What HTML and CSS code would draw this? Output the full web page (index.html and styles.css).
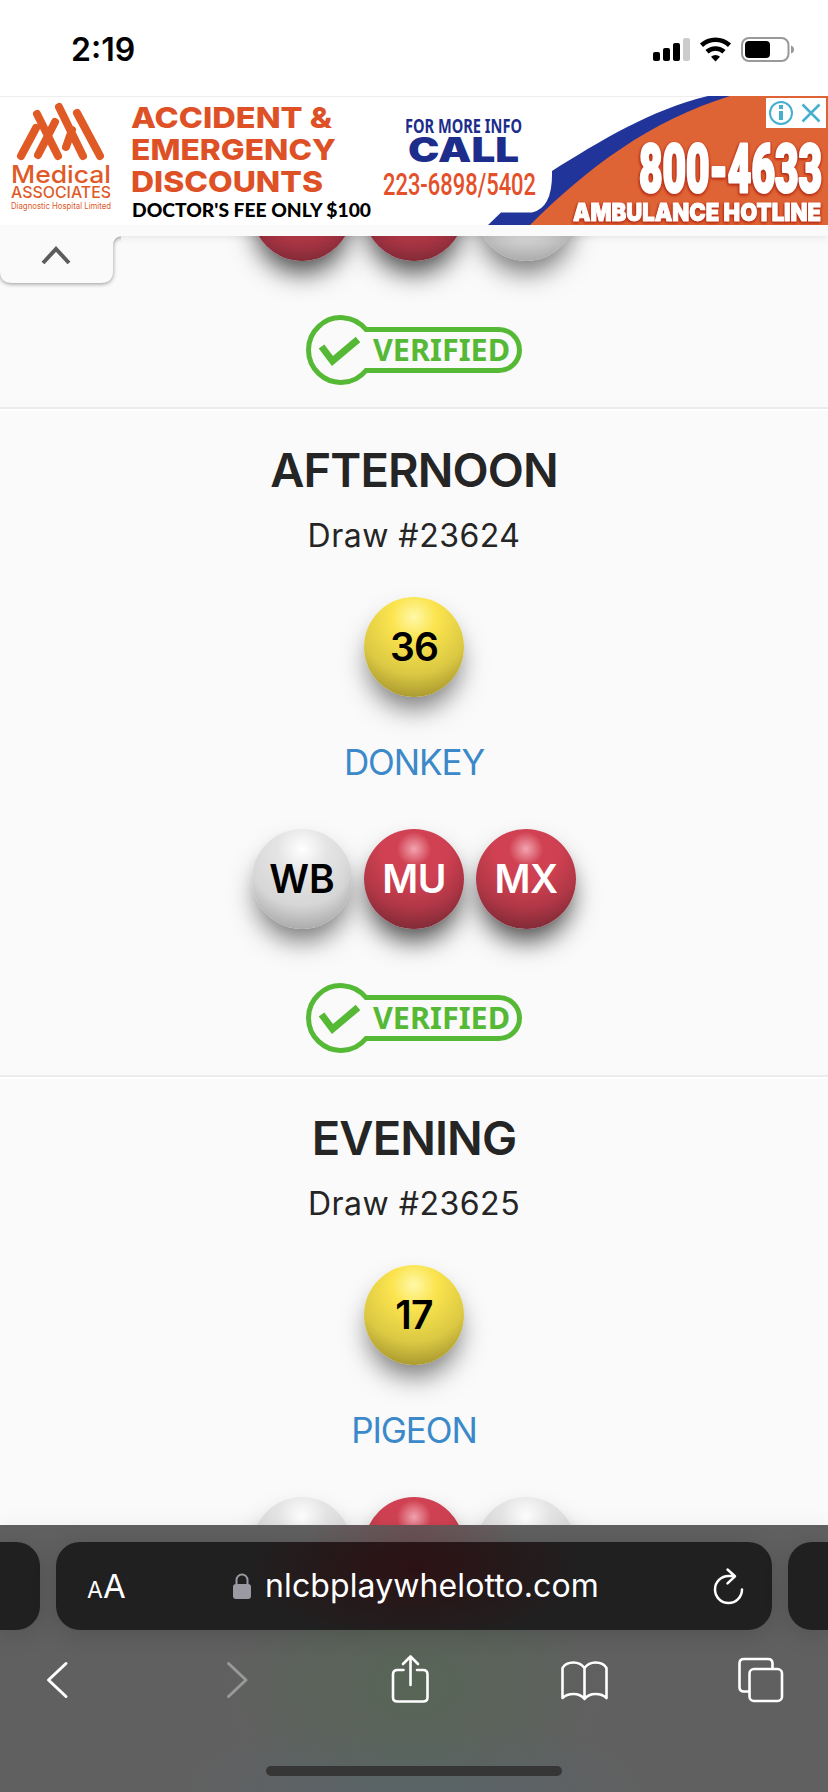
FILE: index.html
```html
<!DOCTYPE html>
<html lang="en">
<head>
<meta charset="utf-8">
<meta name="viewport" content="width=device-width">
<title>Play Whe Results</title>
<link rel="stylesheet" href="styles.css">
</head>
<body>
<div class="phone">
  <header class="status">
    <span class="time">2:19</span>
    <svg class="status-icons" width="142" height="42" viewBox="652 28 142 42">
      <g><rect x="653" y="52" width="7" height="9" rx="2"/><rect x="663" y="48" width="7" height="13" rx="2"/><rect x="673" y="43" width="7" height="18" rx="2"/><rect x="683" y="38" width="7" height="23" rx="2" fill="#ccc"/></g>
      <g fill="none" stroke="#000" stroke-width="4.600"><path d="M701.500 45.300a20.500 20.500 0 0 1 28 0"/><path d="M707 51.800a12.500 12.500 0 0 1 17 0"/></g>
      <path d="M711 56.700a6.800 6.800 0 0 1 9 0l-4.500 4.700Z"/>
      <rect x="742" y="38" width="46.500" height="23" rx="7" fill="none" stroke="#999" stroke-width="2"/>
      <rect x="745" y="41" width="25" height="17" rx="4"/>
      <path d="M791 45.500q3 1 3 4t-3 4Z" fill="#999"/>
    </svg>
  </header>

  <svg class="banner" width="828" height="129" viewBox="0 96 828 129">
    <rect y="96" width="828" height="129" fill="#fff"/>
    <path d="M0 96.500H710" stroke="#eee"/>
    <g stroke="#e05a26" stroke-width="8" stroke-linecap="round" fill="none">
      <path d="M21 156 36 128M38 155 55 122M37 114 58 156M59 107 83 156M66 147 72 130M77 113 100 156"/>
    </g>
    <g fill="#e05a28" font-family="Inter, sans-serif">
      <text x="11" y="183" font-size="24" font-weight="500" textLength="100" lengthAdjust="spacingAndGlyphs">Medical</text>
      <text x="11" y="198" font-size="15.500" font-weight="500" textLength="100" lengthAdjust="spacingAndGlyphs">ASSOCIATES</text>
      <text x="11" y="209" font-size="8.500" textLength="100" lengthAdjust="spacingAndGlyphs">Diagnostic Hospital Limited</text>
    </g>
    <g fill="#de5126" font-family="Inter, sans-serif" font-weight="800" font-size="29">
      <text x="131" y="128" textLength="201" lengthAdjust="spacingAndGlyphs">ACCIDENT &amp;</text>
      <text x="131" y="160" textLength="205" lengthAdjust="spacingAndGlyphs">EMERGENCY</text>
      <text x="131" y="191.500" textLength="192" lengthAdjust="spacingAndGlyphs">DISCOUNTS</text>
    </g>
    <text x="132" y="216.500" font-family="Lato, sans-serif" font-weight="900" font-size="19" textLength="239" lengthAdjust="spacingAndGlyphs">DOCTOR'S FEE ONLY $100</text>
    <g fill="#1c2d8c">
      <text x="405" y="132.500" font-family="Noto Sans, sans-serif" font-weight="700" font-size="20" textLength="117" lengthAdjust="spacingAndGlyphs">FOR MORE INFO</text>
      <text x="408" y="162" font-family="Inter, sans-serif" font-weight="900" font-size="34" textLength="111" lengthAdjust="spacingAndGlyphs">CALL</text>
    </g>
    <text x="383" y="195" fill="#e4502a" font-family="Roboto, sans-serif" font-weight="500" font-size="31" textLength="153" lengthAdjust="spacingAndGlyphs">223-6898/5402</text>
    <path d="M488 225 501 212.500H532Q553 208 552 171C600 141 650 110 708 96H740L560 225Z" fill="#20349a"/>
    <path d="M530 225C588 167 650 121 730 96H828V225Z" fill="#df6435"/>
    <g class="hotline" fill="#fff" stroke="#fff" stroke-linejoin="round" font-weight="900">
      <text x="639" y="192" font-family="Roboto, sans-serif" font-size="66" stroke-width="3" textLength="183" lengthAdjust="spacingAndGlyphs">800-4633</text>
      <text x="573" y="221" font-family="Inter, sans-serif" font-size="25" stroke-width="1" textLength="248" lengthAdjust="spacingAndGlyphs">AMBULANCE HOTLINE</text>
    </g>
    <rect x="766" y="98" width="60" height="30" fill="#fff"/>
    <g fill="none" stroke="#45afd0" stroke-width="2"><circle cx="781" cy="113" r="11"/><path d="m802.500 104.500 17 17m0-17-17 17" stroke-width="2.500"/></g>
    <path d="M779 105h4v4h-4zM779 111h4v9h-4z" fill="#45afd0"/>
  </svg>
  <div class="strip">
    <svg class="tab" width="130" height="72" viewBox="0 225 130 72">
      <path d="M0 225H130V236H123Q113 236 113 246V271Q113 283 101 283H12Q0 283 0 271Z" fill="#fafafa"/>
      <path d="m43 263 13-14 13 14" fill="none" stroke="#5c5c5c" stroke-width="4"/>
    </svg>
  </div>

  <main class="results">
    <section class="draw draw-tail">
      <div class="row"><span class="ball red"></span><span class="ball red"></span><span class="ball white"></span></div>
      <svg class="badge" viewBox="0 0 216 70">
        <path class="outline" d="M60 14.500A32.400 32.400 0 1 0 60 55.500H193a20.500 20.500 0 0 0 0-41Z"/>
        <path class="check" d="M15.500 31.500 26.500 46 52 24.500"/>
        <text x="67" y="45.500" textLength="137" lengthAdjust="spacingAndGlyphs">VERIFIED</text>
      </svg>
    </section>
    <section class="draw">
      <h2>AFTERNOON</h2>
      <p class="number">Draw #23624</p>
      <span class="ball yellow">36</span>
      <a class="mark">DONKEY</a>
      <div class="row"><span class="ball white">WB</span><span class="ball red">MU</span><span class="ball red">MX</span></div>
      <svg class="badge" viewBox="0 0 216 70">
        <path class="outline" d="M60 14.500A32.400 32.400 0 1 0 60 55.500H193a20.500 20.500 0 0 0 0-41Z"/>
        <path class="check" d="M15.500 31.500 26.500 46 52 24.500"/>
        <text x="67" y="45.500" textLength="137" lengthAdjust="spacingAndGlyphs">VERIFIED</text>
      </svg>
    </section>
    <section class="draw">
      <h2>EVENING</h2>
      <p class="number">Draw #23625</p>
      <span class="ball yellow">17</span>
      <a class="mark">PIGEON</a>
      <div class="row"><span class="ball white"></span><span class="ball red"></span><span class="ball white"></span></div>
    </section>
  </main>

  <footer class="browser">
    <div class="tabs">
      <div class="side"></div>
      <div class="address">
        <span class="aa"><small>A</small>A</span>
        <span class="site">
          <svg width="18" height="26" viewBox="0 0 18 26"><rect y="11" width="18" height="15" rx="3" fill="#9b99a1"/><path d="M3.500 12V7a5.500 5.500 0 0 1 11 0v5" fill="none" stroke="#9b99a1" stroke-width="2"/></svg>
          <span class="url">nlcbplaywhelotto.com</span>
        </span>
        <svg class="reload" width="32" height="38" viewBox="712 1565 32 38" fill="none" stroke="#fff" stroke-width="2.500" stroke-linecap="round" stroke-linejoin="round"><path d="M741 1587.500a13.500 13.500 0 1 1-13.500-13.500h6M726.500 1567.500l7.500 6.800-7.500 7"/></svg>
      </div>
      <div class="side"></div>
    </div>
    <nav class="tools">
      <svg viewBox="30 1652 56 56"><path d="M66 1663.500 48.500 1680 66 1696.500" stroke-width="3"/></svg>
      <svg class="off" viewBox="206 1652 56 56"><path d="m228.500 1663.500 17.500 16.500-17.500 16.500" stroke-width="3"/></svg>
      <svg viewBox="381.500 1652 56 56"><path d="M403 1670h-6q-4.500 0-4.500 4.500v23q0 4 4.500 4h25.500q4.500 0 4.500-4v-23q0-4.500-4.500-4.500h-6M410 1685v-28M402.500 1664l7.500-7.500 7.500 7.500"/></svg>
      <svg viewBox="557 1652 56 56"><path d="M584.500 1668q-4-5.500-11-5.500-8 0-11 5.500v30q4-4 11-4t11 5q4-5 11-5t11 4v-30q-3-5.500-11-5.500-7 0-11 5.500Zm0 0v31"/></svg>
      <svg viewBox="733 1652 56 56"><path d="M749 1691.500h-5q-4.500 0-4.500-4.500v-23.500q0-4.500 4.500-4.500h24q4.500 0 4.500 4.500v5"/><rect x="749.500" y="1669" width="32.500" height="32" rx="4.500"/></svg>
    </nav>
    <div class="home"></div>
  </footer>
</div>
</body>
</html>
```
FILE: styles.css
```css
* { box-sizing: border-box; }
body { margin: 0; background: #fafafa; font-family: Inter, "Noto Sans", sans-serif; }
.phone { width: 828px; height: 1792px; overflow: hidden; display: flex; flex-direction: column; }
.status { height: 96px; flex: none; background: #fff; display: flex; justify-content: space-between; align-items: flex-start; padding: 28px 34px 0 71px; }
.time { font-size: 32px; font-weight: 600; line-height: 43px; }
.status-icons { display: block; }
.banner { display: block; flex: none; }
.hotline { filter: drop-shadow(-1px 1px 1px #b52c16) drop-shadow(1px 1px 1px #c43c1c); }
.strip { position: relative; z-index: 2; height: 11px; flex: none; background: #fafafa; box-shadow: 0 0 8px rgba(0,0,0,.12); clip-path: inset(0 0 -70px 0); }
.tab { position: absolute; left: 0; top: 0; filter: drop-shadow(0 1px 2px rgba(0,0,0,.4)); clip-path: inset(0 9px 0 0); }

.results { height: 1289px; flex: none; overflow: hidden; background: #fafafa; }
.draw { height: 668px; border-top: 2px solid #ececec; box-shadow: inset 0 2px #fff; padding-top: 25px; display: flex; flex-direction: column; align-items: center; }
.draw-tail { height: 171px; border: 0; box-shadow: none; padding: 0; }
.draw-tail .row { margin-top: -75px; }
h2 { margin: 0; font-size: 47px; font-weight: 600; line-height: 72px; letter-spacing: -0.9px; color: #252525; }
.number { margin: 6px 0 37px; font-size: 32px; line-height: 48px; letter-spacing: 0.5px; color: #252525; }
.mark { margin: 38px 0 40px; font-size: 35px; line-height: 54px; letter-spacing: -1.1px; color: #3b89c9; }
.row { display: flex; gap: 12px; }
.ball { width: 100px; height: 100px; flex: none; border-radius: 50%; display: flex; align-items: center; justify-content: center; padding-bottom: 2px; font-size: 39px; font-weight: 600; color: #000; }
.yellow { background: radial-gradient(circle at 50% 20%, #fff8a8 0, #fbe44e 24%, #dcc943 60%, #ad9d31 84%); box-shadow: 0 16px 26px -4px rgba(0,0,0,.5); letter-spacing: -0.8px; }
.white { background: radial-gradient(circle at 50% 20%, #fff 0, #e4e4e4 27%, #d6d6d6 60%, #adadad 84%); box-shadow: 0 16px 26px -4px rgba(0,0,0,.52); }
.red { background: radial-gradient(circle at 50% 20%, #f3a4b0 0, #d04253 18%, #cf4152 35%, #b13746 62%, #842b38 84%); box-shadow: 0 16px 26px -4px rgba(0,0,0,.7); color: #fff; letter-spacing: -0.5px; }
.badge { display: block; width: 216px; height: 70px; margin-top: 54px; flex: none; }
.badge path { fill: none; stroke: #55b936; }
.badge .outline { stroke-width: 5px; }
.badge .check { stroke-width: 7px; }
.badge text { font: 700 29.5px "DejaVu Sans", sans-serif; font-family: "Noto Sans", sans-serif; fill: #55b936; }

.browser { height: 267px; flex: none; position: relative; z-index: 3; padding-top: 17px; background: radial-gradient(ellipse 110px 90px at 414px 10px, rgba(120,55,65,.4), transparent), radial-gradient(ellipse 190px 130px at 414px 160px, rgba(82,104,80,.65), transparent), radial-gradient(ellipse 230px 80px at 414px 267px, rgba(88,100,108,.8), transparent), #606060; box-shadow: 0 0 22px rgba(0,0,0,.05); }
.tabs { display: flex; gap: 16px; }
.side { width: 40px; height: 88px; background: #202020; border-radius: 0 24px 24px 0; box-shadow: 0 4px 24px rgba(0,0,0,.15); }
.side:last-child { border-radius: 24px 0 0 24px; }
.address { width: 716px; height: 88px; border-radius: 24px; padding: 0 27px 0 31px; display: flex; align-items: center; justify-content: space-between; color: #fff; background: radial-gradient(ellipse 170px 75px at 358px 25px, #2d1114, transparent), #202020; box-shadow: 0 4px 24px rgba(0,0,0,.15); }
.aa { width: 40px; padding-top: 3px; font-size: 33px; line-height: 40px; white-space: nowrap; }
.aa small { font-size: 23px; }
.site { display: flex; align-items: center; gap: 14px; margin-right: 8px; }
.url { font-size: 32px; line-height: 44px; white-space: nowrap; letter-spacing: 0.1px; }
.reload { display: block; }
.tools { display: flex; justify-content: space-between; padding: 22px 39px 0 30px; }
.tools svg { width: 56px; height: 56px; fill: none; stroke: #fff; stroke-width: 2.6; stroke-linecap: round; stroke-linejoin: round; }
.tools .off { stroke: #999; }
.home { width: 296px; height: 10px; border-radius: 5px; background: #363636; margin: 58px auto 0; }
```
